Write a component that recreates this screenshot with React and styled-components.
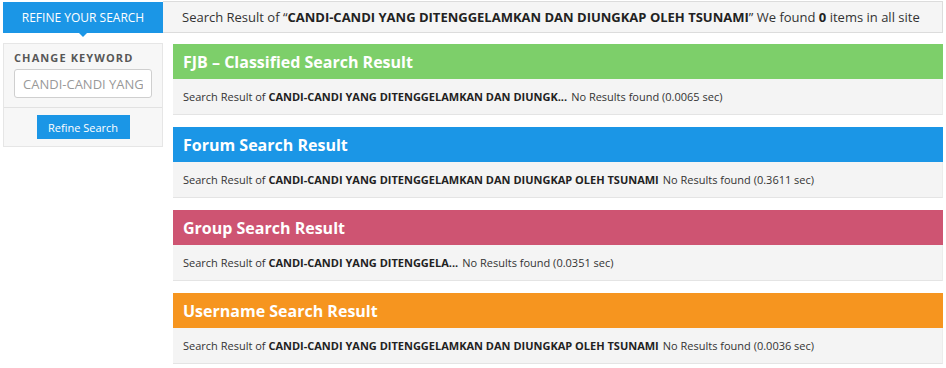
import React from 'react';
import styled, { createGlobalStyle } from 'styled-components';

const GlobalStyle = createGlobalStyle`
  html, body {
    margin: 0;
    padding: 0;
    background: #fff;
  }
  body {
    font-family: "Open Sans", "Liberation Sans", Arial, sans-serif;
    color: #333;
  }
`;

const KEYWORD = 'CANDI-CANDI YANG DITENGGELAMKAN DAN DIUNGKAP OLEH TSUNAMI';

const Page = styled.div`
  width: 940px;
  padding: 1px 3px 0 3px;
`;

const TopRow = styled.div`
  display: flex;
  height: 32px;
`;

const Tab = styled.div`
  position: relative;
  width: 160px;
  margin-top: 1px;
  height: 31px;
  background: #1b96e6;
  color: #fff;
  font-size: 12px;
  font-weight: 400;
  display: flex;
  align-items: center;
  justify-content: center;

  &::after {
    content: '';
    position: absolute;
    left: 76px;
    bottom: -4px;
    border-left: 4px solid transparent;
    border-right: 4px solid transparent;
    border-top: 4px solid #1b96e6;
  }
`;

const Summary = styled.div`
  flex: 1;
  box-sizing: border-box;
  background: #f5f5f5;
  border: 1px solid #dcdcdc;
  border-left: none;
  padding-left: 19px;
  font-size: 13px;
  color: #333;
  display: flex;
  align-items: center;
  white-space: nowrap;

  b {
    color: #222;
    font-weight: 700;
  }
`;

const Columns = styled.div`
  display: flex;
  gap: 10px;
  margin-top: 10px;
  align-items: flex-start;
`;

const Sidebar = styled.div`
  width: 160px;
  box-sizing: border-box;
  background: #f7f7f7;
  border: 1px solid #e6e6e6;
`;

const KeywordBox = styled.div`
  padding: 6px 10px 9px 10px;
  border-bottom: 1px solid #e2e2e2;
`;

const Label = styled.div`
  font-size: 11px;
  font-weight: 700;
  letter-spacing: 1.1px;
  color: #575757;
  margin-bottom: 4px;
  line-height: 15px;
`;

const Input = styled.input`
  display: block;
  width: 100%;
  box-sizing: border-box;
  height: 29px;
  border: 1px solid #cfcfcf;
  border-radius: 3px;
  background: #fff;
  padding: 0 8px;
  font-family: inherit;
  font-size: 13px;
  color: #999;
  outline: none;
`;

const ButtonBox = styled.div`
  display: flex;
  justify-content: center;
  padding: 7px 0 7px 0;
`;

const Button = styled.button`
  height: 24px;
  width: 93px;
  border: none;
  background: #1b96e6;
  color: #fff;
  font-family: inherit;
  font-size: 11px;
  padding: 0;
`;

const Results = styled.div`
  flex: 1;
  display: flex;
  flex-direction: column;
  gap: 12px;
  margin-top: 1px;
`;

const Section = styled.div``;

const Header = styled.div`
  height: 35px;
  background: ${(p) => p.$color};
  color: #fff;
  font-size: 16px;
  font-weight: 700;
  display: flex;
  align-items: center;
  padding-left: 10px;
`;

const Body = styled.div`
  height: 35px;
  background: #f4f4f4;
  border-bottom: 1px solid #e4e4e4;
  border-right: 1px solid #ececec;
  font-size: 11px;
  color: #333;
  display: flex;
  align-items: center;
  padding-left: 10px;
  white-space: nowrap;

  b {
    color: #222;
    font-weight: 700;
    margin-right: 4px;
  }
`;

const sections = [
  { title: 'FJB \u2013 Classified Search Result', color: '#7dcf6a', keyword: 'CANDI-CANDI YANG DITENGGELAMKAN DAN DIUNGK...', extra: ' ', time: '0.0065' },
  { title: 'Forum Search Result', color: '#1b96e6', keyword: KEYWORD, time: '0.3611' },
  { title: 'Group Search Result', color: '#ce5472', keyword: 'CANDI-CANDI YANG DITENGGELA...', time: '0.0351' },
  { title: 'Username Search Result', color: '#f6951f', keyword: KEYWORD, time: '0.0036' },
];

export default function App() {
  return (
    <Page>
      <GlobalStyle />
      <TopRow>
        <Tab>REFINE YOUR SEARCH</Tab>
        <Summary>
          Search Result of &ldquo;<b>{KEYWORD}</b>&rdquo; We found&nbsp;<b>0</b>&nbsp;items in all site
        </Summary>
      </TopRow>
      <Columns>
        <Sidebar>
          <KeywordBox>
            <Label>CHANGE KEYWORD</Label>
            <Input readOnly value={KEYWORD} />
          </KeywordBox>
          <ButtonBox>
            <Button>Refine Search</Button>
          </ButtonBox>
        </Sidebar>
        <Results>
          {sections.map((s) => (
            <Section key={s.title}>
              <Header $color={s.color}>{s.title}</Header>
              <Body>
                Search Result of&nbsp;<b>{s.keyword}</b>{s.extra}No Results found ({s.time} sec)
              </Body>
            </Section>
          ))}
        </Results>
      </Columns>
    </Page>
  );
}
